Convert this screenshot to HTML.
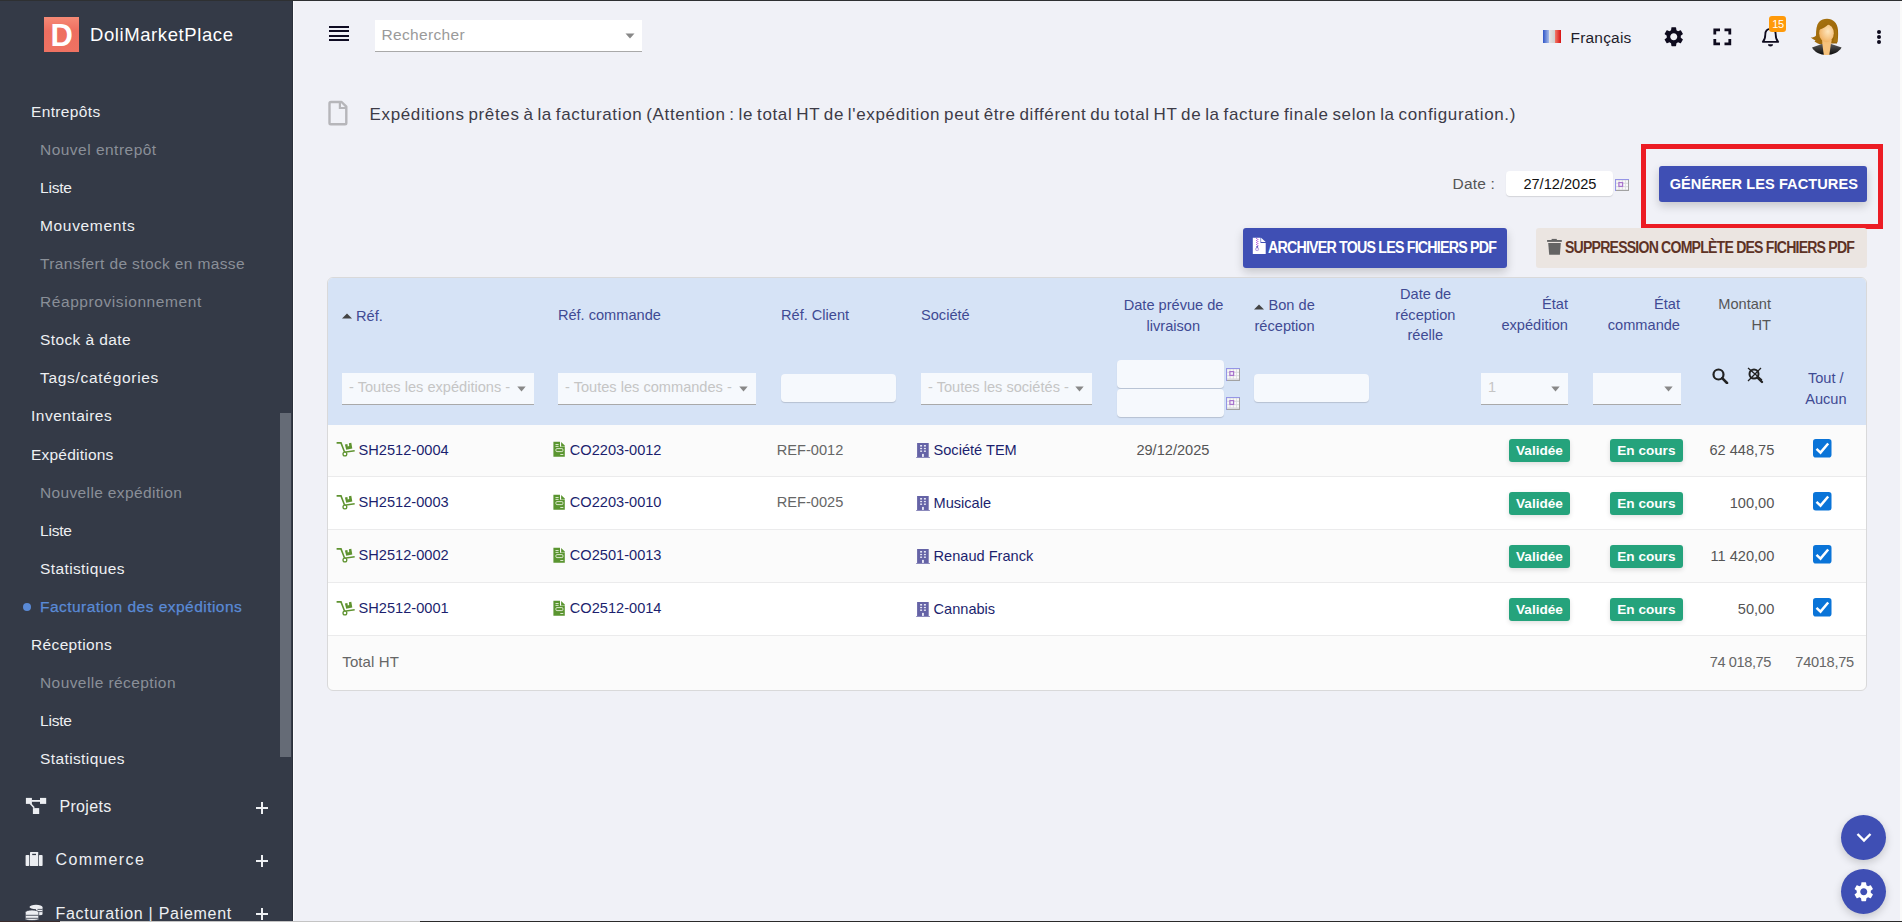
<!DOCTYPE html>
<html><head><meta charset="utf-8">
<style>
*{box-sizing:border-box;margin:0;padding:0}
html,body{width:1902px;height:922px;overflow:hidden;background:#f0f1f7;font-family:"Liberation Sans",sans-serif}
.a{position:absolute;white-space:nowrap}
svg.a{display:block}
</style></head><body>
<div class="a" style="left:0px;top:0px;width:292px;height:922px;background:#343a47"></div>
<div class="a" style="left:292px;top:0px;width:1px;height:922px;background:#2b303b"></div>
<div class="a" style="left:293px;top:0px;width:1px;height:922px;background:#fbfbfd"></div>
<div class="a" style="left:280px;top:413px;width:11px;height:344px;background:#656b76"></div>
<div class="a" style="left:44px;top:17px;width:35px;height:35px;background:linear-gradient(#f58a76,#ee6e60 40%,#ef7262)"></div>
<div class="a " style="top:19.56px;font-size:31px;line-height:31px;color:#fff;font-weight:bold;left:50.5px;">D</div>
<div class="a " style="top:26.34px;font-size:18.5px;line-height:18.5px;color:#fff;letter-spacing:0.59px;left:90px;">DoliMarketPlace</div>
<div class="a " style="top:103.68px;font-size:15.5px;line-height:15.5px;color:#eef0f3;letter-spacing:0.36px;left:31px;">Entrepôts</div>
<div class="a " style="top:141.78px;font-size:15.5px;line-height:15.5px;color:#8a8f98;letter-spacing:0.48px;left:40px;">Nouvel entrepôt</div>
<div class="a " style="top:179.88px;font-size:15.5px;line-height:15.5px;color:#eef0f3;letter-spacing:-0.2px;left:40px;">Liste</div>
<div class="a " style="top:217.98px;font-size:15.5px;line-height:15.5px;color:#eef0f3;letter-spacing:0.67px;left:40px;">Mouvements</div>
<div class="a " style="top:256.08px;font-size:15.5px;line-height:15.5px;color:#8a8f98;letter-spacing:0.37px;left:40px;">Transfert de stock en masse</div>
<div class="a " style="top:294.18px;font-size:15.5px;line-height:15.5px;color:#8a8f98;letter-spacing:0.58px;left:40px;">Réapprovisionnement</div>
<div class="a " style="top:332.28px;font-size:15.5px;line-height:15.5px;color:#eef0f3;letter-spacing:0.4px;left:40px;">Stock à date</div>
<div class="a " style="top:370.38px;font-size:15.5px;line-height:15.5px;color:#eef0f3;letter-spacing:0.7px;left:40px;">Tags/catégories</div>
<div class="a " style="top:408.48px;font-size:15.5px;line-height:15.5px;color:#eef0f3;letter-spacing:0.49px;left:31px;">Inventaires</div>
<div class="a " style="top:446.58px;font-size:15.5px;line-height:15.5px;color:#eef0f3;letter-spacing:0.22px;left:31px;">Expéditions</div>
<div class="a " style="top:484.68px;font-size:15.5px;line-height:15.5px;color:#8a8f98;letter-spacing:0.36px;left:40px;">Nouvelle expédition</div>
<div class="a " style="top:522.78px;font-size:15.5px;line-height:15.5px;color:#eef0f3;letter-spacing:-0.2px;left:40px;">Liste</div>
<div class="a " style="top:560.88px;font-size:15.5px;line-height:15.5px;color:#eef0f3;letter-spacing:0.39px;left:40px;">Statistiques</div>
<div class="a " style="top:598.98px;font-size:15.5px;line-height:15.5px;color:#5a8ad6;letter-spacing:0.47px;left:40px;-webkit-text-stroke:0.25px #5a8ad6;">Facturation des expéditions</div>
<div class="a " style="top:637.08px;font-size:15.5px;line-height:15.5px;color:#eef0f3;letter-spacing:0.36px;left:31px;">Réceptions</div>
<div class="a " style="top:675.18px;font-size:15.5px;line-height:15.5px;color:#8a8f98;letter-spacing:0.42px;left:40px;">Nouvelle réception</div>
<div class="a " style="top:713.28px;font-size:15.5px;line-height:15.5px;color:#eef0f3;letter-spacing:-0.2px;left:40px;">Liste</div>
<div class="a " style="top:751.38px;font-size:15.5px;line-height:15.5px;color:#eef0f3;letter-spacing:0.39px;left:40px;">Statistiques</div>
<div class="a" style="left:23px;top:603px;width:8px;height:8px;background:#5a8ad6;border-radius:50%"></div>
<div class="a " style="top:799.26px;font-size:16px;line-height:16px;color:#eef0f3;letter-spacing:0.36px;left:59.4px;">Projets</div>
<div class="a " style="top:851.96px;font-size:16px;line-height:16px;color:#eef0f3;letter-spacing:1.45px;left:55.5px;">Commerce</div>
<div class="a " style="top:905.86px;font-size:16px;line-height:16px;color:#eef0f3;letter-spacing:0.72px;left:55.5px;">Facturation | Paiement</div>
<div class="a" style="left:256px;top:806.5px;width:12px;height:2.0px;background:#eef0f3"></div>
<div class="a" style="left:261px;top:801.5px;width:2px;height:12.0px;background:#eef0f3"></div>
<div class="a" style="left:256px;top:859.8px;width:12px;height:2.0px;background:#eef0f3"></div>
<div class="a" style="left:261px;top:854.8px;width:2px;height:12.0px;background:#eef0f3"></div>
<div class="a" style="left:256px;top:913px;width:12px;height:2px;background:#eef0f3"></div>
<div class="a" style="left:261px;top:908px;width:2px;height:12px;background:#eef0f3"></div>
<svg class="a" style="left:25px;top:797px" width="23" height="18" viewBox="0 0 23 18"><g fill="#eceef2"><rect x="0.9" y="0.9" width="6" height="6"/><rect x="15" y="0.9" width="6.2" height="6"/><rect x="7.9" y="11.1" width="6.3" height="5.9"/><rect x="6.5" y="3" width="8.8" height="1.8"/></g><path d="M5.3 6.5L9.2 10.8" stroke="#eceef2" stroke-width="1.6"/></svg>
<svg class="a" style="left:22px;top:846px" width="26" height="24" viewBox="0 0 26 24"><g fill="#eceef2"><rect x="3.6" y="8.9" width="3.7" height="11.1" rx="0.8"/><rect x="8" y="6" width="8.2" height="14" rx="0.6"/><rect x="16.9" y="8.9" width="3.7" height="11.1" rx="0.8"/></g><rect x="10.2" y="7.8" width="3.8" height="1.3" fill="#343a47"/></svg>
<svg class="a" style="left:22px;top:900px" width="26" height="22" viewBox="0 0 26 22"><g fill="#eceef2"><rect x="14" y="7" width="6.5" height="7.2"/><ellipse cx="17.3" cy="14.2" rx="3.2" ry="1"/><ellipse cx="14" cy="7" rx="6.5" ry="2.2"/></g><path d="M15.5 9.4H20.5M15.5 11.6H20.5" stroke="#343a47" stroke-width="0.8"/><g fill="#eceef2" stroke="#343a47" stroke-width="0.7"><path d="M3.3 12.2A6.7 2.2 0 0 1 16.7 12.2V19.2A6.7 1.3 0 0 1 3.3 19.2Z"/></g><path d="M3.6 15.3H16.4M3.6 18.3H16.4" stroke="#343a47" stroke-width="0.8"/></svg>
<div class="a" style="left:329px;top:26px;width:20px;height:2px;background:#0e0b22"></div>
<div class="a" style="left:329px;top:30px;width:20px;height:2px;background:#0e0b22"></div>
<div class="a" style="left:329px;top:35px;width:20px;height:2px;background:#0e0b22"></div>
<div class="a" style="left:329px;top:39px;width:20px;height:2px;background:#0e0b22"></div>
<div class="a" style="left:375px;top:20px;width:267px;height:32px;background:#fff;border-bottom:1px solid #a9a9a9"></div>
<div class="a " style="top:27.08px;font-size:15.5px;line-height:15.5px;color:#9a9a9a;letter-spacing:0.33px;left:381.5px;">Rechercher</div>
<svg class="a" style="left:625px;top:33px" width="10" height="6" viewBox="0 0 10 6"><path d="M0.5 0.5 L9.5 0.5 L5 5.5Z" fill="#888"/></svg>
<div class="a" style="left:1543px;top:30px;width:6px;height:13px;background:linear-gradient(90deg,#2f55c8,#a9bde9);"></div>
<div class="a" style="left:1549px;top:30px;width:6px;height:13px;background:linear-gradient(90deg,#e6e6e6,#cfcfcf);"></div>
<div class="a" style="left:1555px;top:30px;width:6px;height:13px;background:linear-gradient(90deg,#f07a6a,#d81010);"></div>
<div class="a " style="top:29.98px;font-size:15.5px;line-height:15.5px;color:#1f1d2b;letter-spacing:0.2px;left:1570.5px;">Français</div>
<svg class="a" style="left:1662px;top:25px" width="23.5" height="23.5" viewBox="0 0 24 24"><path fill="#0e0b1e" d="M19.14 12.94c.04-.3.06-.61.06-.94 0-.32-.02-.64-.07-.94l2.03-1.58a.49.49 0 0 0 .12-.61l-1.92-3.32a.488.488 0 0 0-.59-.22l-2.39.96c-.5-.38-1.03-.7-1.62-.94l-.36-2.54a.484.484 0 0 0-.48-.41h-3.84c-.24 0-.43.17-.47.41l-.36 2.54c-.59.24-1.13.57-1.62.94l-2.39-.96c-.22-.08-.47 0-.59.22L2.74 8.87c-.12.21-.08.47.12.61l2.03 1.58c-.05.3-.09.63-.09.94s.02.64.07.94l-2.03 1.58a.49.49 0 0 0-.12.61l1.92 3.32c.12.22.37.29.59.22l2.39-.96c.5.38 1.03.7 1.62.94l.36 2.54c.05.24.24.41.48.41h3.84c.24 0 .44-.17.47-.41l.36-2.54c.59-.24 1.13-.56 1.62-.94l2.39.96c.22.08.47 0 .59-.22l1.92-3.32c.12-.22.07-.47-.12-.61l-2.01-1.58zM12 15.6c-1.98 0-3.6-1.62-3.6-3.6s1.62-3.6 3.6-3.6 3.6 1.62 3.6 3.6-1.62 3.6-3.6 3.6z"/></svg>
<svg class="a" style="left:1713px;top:28px" width="19" height="18" viewBox="0 0 19 18"><path d="M1.8 6.5V1.8H7 M11.5 1.8H16.8V6.5 M16.8 11V15.8H11.5 M7 15.8H1.8V11" fill="none" stroke="#0e0b1e" stroke-width="2.8"/></svg>
<svg class="a" style="left:1755px;top:10px" width="40" height="40" viewBox="0 0 40 40"><path d="M7.8 31.8 C9.6 30 10.3 28 10.3 24.5 C10.3 20.5 12.3 18.8 15.5 18.8 C18.7 18.8 20.7 20.5 20.7 24.5 C20.7 28 21.4 30 23.2 31.8 Z" fill="none" stroke="#0e0b1e" stroke-width="1.8" stroke-linejoin="round"/><path d="M13 34.2 H18 C18 35.8 16.9 36.4 15.5 36.4 C14.1 36.4 13 35.8 13 34.2Z" fill="#0e0b1e"/></svg>
<div class="a" style="left:1769px;top:16px;width:17px;height:16px;background:#ff9a0a;border-radius:3px"></div>
<div class="a " style="top:19.29px;font-size:11px;line-height:11px;color:#fff;letter-spacing:-0.4px;left:1772.2px;">15</div>
<svg class="a" style="left:1810px;top:18px" width="34" height="38" viewBox="0 0 34 38"><defs><radialGradient id="fg" cx="0.6" cy="0.4" r="0.65"><stop offset="0" stop-color="#fee6bd"/><stop offset="1" stop-color="#f0b060"/></radialGradient><linearGradient id="sg" x1="0" y1="0" x2="0" y2="1"><stop offset="0" stop-color="#5a5a5a"/><stop offset="1" stop-color="#0a0a0a"/></linearGradient><linearGradient id="hg" x1="0" y1="0" x2="1" y2="1"><stop offset="0" stop-color="#a87410"/><stop offset="1" stop-color="#9a6408"/></linearGradient></defs>
<path d="M17 0.8 C23 0.8 27.5 5 28 12 C28.3 18 28 22 27 25.5 L20 25.5 L12 26.5 C9 26.5 6.5 25 4.5 23.5 L5.5 22.5 C3.5 21.5 2 20.5 0.7 19.5 C3 19.5 5 19 6 17.5 C6 12 6.5 7 9 4 C11 2 14 0.8 17 0.8 Z" fill="url(#hg)"/>
<path d="M12.1 22 L21.75 22 L19.1 37 L13.4 37 Z" fill="#f3c07a"/>
<ellipse cx="16.5" cy="15.2" rx="7.3" ry="9" fill="url(#fg)"/>
<path d="M7.5 13 L9.2 11.8 C13 10.5 16 8.5 18.5 6.2 L15 3 L8 6 Z" fill="url(#hg)"/>
<path d="M24.5 10 C25 15 24.5 20 23 24 L27.5 24 L27 12Z" fill="#a87410"/>
<path d="M2 29.4 L11.9 26 L21.2 26 L31.6 29.4 C29 34 23 36.9 16.5 36.9 C10 36.9 4.5 34 2 29.4 Z" fill="url(#sg)"/>
<path d="M12.3 25.5 L21 25.5 L19.3 37 L13.8 37 Z" fill="#f6c27c"/></svg>
<div class="a" style="left:1876.5px;top:30px;width:4.0px;height:4px;background:#0e0b1e;border-radius:50%"></div>
<div class="a" style="left:1876.5px;top:35px;width:4.0px;height:4px;background:#0e0b1e;border-radius:50%"></div>
<div class="a" style="left:1876.5px;top:40px;width:4.0px;height:4px;background:#0e0b1e;border-radius:50%"></div>
<svg class="a" style="left:322px;top:96px" width="32" height="34" viewBox="0 0 32 34"><path d="M7.5 7.5 Q7.5 6 9 6 H19.6 L24.3 10.7 V27 Q24.3 28.3 23 28.3 H8.8 Q7.5 28.3 7.5 27 Z" fill="none" stroke="#b6b6ba" stroke-width="2.4" stroke-linejoin="round"/><path d="M17.9 6.5 V12 H23.8" fill="none" stroke="#b6b6ba" stroke-width="2.2"/></svg>
<div class="a " style="top:105.61px;font-size:17px;line-height:17px;color:#3d3b47;letter-spacing:0.65px;left:369.5px;word-spacing:-1.5px;">Expéditions prêtes à la facturation (Attention : le total HT de l&#39;expédition peut être différent du total HT de la facture finale selon la configuration.)</div>
<div class="a " style="top:176.48px;font-size:15.5px;line-height:15.5px;color:#555;letter-spacing:0.2px;left:1452.5px;">Date :</div>
<div class="a" style="left:1506px;top:171px;width:107px;height:25px;background:#fff;border-radius:4px;box-shadow:0 1px 1px rgba(0,0,0,0.12)"></div>
<div class="a " style="top:176.74px;font-size:14.6px;line-height:14.6px;color:#111;left:1523.4px;">27/12/2025</div>
<svg class="a" style="left:1615px;top:179px" width="14" height="12" viewBox="0 0 14 12"><rect x="0" y="0" width="14" height="12" fill="#dcdce0"/><rect x="1.3" y="1.5" width="2.2" height="2.2" fill="#fafafa"/><rect x="1.3" y="4.9" width="2.2" height="2.2" fill="#fafafa"/><rect x="1.3" y="8.2" width="2.2" height="2.2" fill="#fafafa"/><rect x="4.6" y="1.5" width="2.2" height="2.2" fill="#fafafa"/><rect x="4.6" y="4.9" width="2.2" height="2.2" fill="#fafafa"/><rect x="4.6" y="8.2" width="2.2" height="2.2" fill="#fafafa"/><rect x="7.9" y="1.5" width="2.2" height="2.2" fill="#fafafa"/><rect x="7.9" y="4.9" width="2.2" height="2.2" fill="#fafafa"/><rect x="7.9" y="8.2" width="2.2" height="2.2" fill="#fafafa"/><rect x="10.9" y="1.5" width="2.2" height="2.2" fill="#fafafa"/><rect x="10.9" y="4.9" width="2.2" height="2.2" fill="#fafafa"/><rect x="10.9" y="8.2" width="2.2" height="2.2" fill="#fafafa"/><rect x="0" y="0" width="14" height="1" fill="#9595e6"/><rect x="0" y="0" width="1" height="12" fill="#9595e6"/><rect x="13" y="1" width="1" height="11" fill="#a2a2a2"/><rect x="1" y="11" width="13" height="1" fill="#a2a2a2"/><rect x="3.9" y="3.6" width="3.7" height="3.8" fill="#f4eefa" stroke="#a874cc" stroke-width="1.2"/></svg>
<div class="a" style="left:1641px;top:144px;width:242px;height:85px;border:5px solid #ec1c24;box-sizing:border-box"></div>
<div class="a" style="left:1659px;top:166px;width:208px;height:36px;background:#3f4fb4;border-radius:3px;box-shadow:0 4px 10px rgba(0,0,0,0.18)"></div>
<div class="a " style="top:176.74px;font-size:14.6px;line-height:14.6px;color:#fff;font-weight:bold;letter-spacing:0.05px;left:1669.7px;">GÉNÉRER LES FACTURES</div>
<div class="a" style="left:1243px;top:228px;width:264px;height:40px;background:#3f4fb4;border-radius:3px;box-shadow:0 4px 10px rgba(0,0,0,0.18)"></div>
<svg class="a" style="left:1248px;top:234px" width="24" height="24" viewBox="0 0 24 24"><path d="M4.8 3.8H12.5V9H17.7V20H4.8Z" fill="#fff"/><path d="M13.1 3.8L17.7 8.1H13.1Z" fill="#fff"/><g fill="#b556d6"><rect x="8.1" y="4" width="1.1" height="1"/><rect x="9.3" y="5" width="1.1" height="1"/><rect x="8.1" y="6" width="1.1" height="1"/><rect x="9.3" y="7" width="1.1" height="1"/><rect x="8.1" y="8" width="1.1" height="1"/><rect x="9.3" y="9" width="1.1" height="1"/><rect x="8.1" y="10" width="1.1" height="1"/><rect x="9.3" y="11" width="1.1" height="1"/></g><rect x="8.3" y="12.2" width="1.8" height="1.6" fill="#3a3ab0"/><ellipse cx="9.1" cy="15.2" rx="1.6" ry="1.5" fill="#eef" stroke="#a070d0" stroke-width="0.6"/></svg>
<div class="a " style="top:240.06px;font-size:16px;line-height:16px;color:#fff;font-weight:bold;letter-spacing:-0.9px;left:1268px;transform:scaleX(0.89);transform-origin:0 0;">ARCHIVER TOUS LES FICHIERS PDF</div>
<div class="a" style="left:1536px;top:228px;width:331px;height:40px;background:#ebe5e1;border-radius:3px"></div>
<svg class="a" style="left:1542px;top:234px" width="24" height="24" viewBox="0 0 24 24"><g fill="#646464"><rect x="9.6" y="4.9" width="5.2" height="1.4"/><rect x="5.1" y="6" width="14.7" height="1.9"/><path d="M6.2 8.9H18.8L17.9 20.8H7.2Z"/></g></svg>
<div class="a " style="top:240.16px;font-size:16px;line-height:16px;color:#5e3326;font-weight:bold;letter-spacing:-0.9px;left:1564.5px;transform:scaleX(0.88);transform-origin:0 0;">SUPPRESSION COMPLÈTE DES FICHIERS PDF</div>
<div class="a" style="left:327px;top:277px;width:1540px;height:414px;border:1px solid #d9d9da;border-radius:6px;background:#fbfbfb;box-sizing:border-box;overflow:hidden"></div>
<div class="a" style="left:328px;top:278px;width:1538px;height:147px;background:#d6e3f6;border-radius:5px 5px 0 0"></div>
<div class="a" style="left:328px;top:425px;width:1538px;height:52px;background:#fbfbfb"></div>
<div class="a" style="left:328px;top:476px;width:1538px;height:1px;background:#ebebec"></div>
<div class="a" style="left:328px;top:477px;width:1538px;height:53px;background:#ffffff"></div>
<div class="a" style="left:328px;top:529px;width:1538px;height:1px;background:#ebebec"></div>
<div class="a" style="left:328px;top:530px;width:1538px;height:53px;background:#fbfbfb"></div>
<div class="a" style="left:328px;top:582px;width:1538px;height:1px;background:#ebebec"></div>
<div class="a" style="left:328px;top:583px;width:1538px;height:53px;background:#ffffff"></div>
<div class="a" style="left:328px;top:635px;width:1538px;height:1px;background:#ebebec"></div>
<svg class="a" style="left:342px;top:313px" width="10" height="6" viewBox="0 0 10 6"><path d="M0 5.5L5 0.5L10 5.5Z" fill="#444"/></svg>
<div class="a " style="top:308.64px;font-size:14.6px;line-height:14.6px;color:#3f4a93;left:356px;">Réf.</div>
<div class="a " style="top:308.44px;font-size:14.6px;line-height:14.6px;color:#3f4a93;left:557.9px;">Réf. commande</div>
<div class="a " style="top:308.44px;font-size:14.6px;line-height:14.6px;color:#3f4a93;left:781px;">Réf. Client</div>
<div class="a " style="top:308.44px;font-size:14.6px;line-height:14.6px;color:#3f4a93;left:921px;">Société</div>
<div class="a " style="top:297.84px;font-size:14.6px;line-height:14.6px;color:#3f4a93;left:873.5999999999999px;width:600px;text-align:center;">Date prévue de</div>
<div class="a " style="top:318.64px;font-size:14.6px;line-height:14.6px;color:#3f4a93;left:873.3px;width:600px;text-align:center;">livraison</div>
<svg class="a" style="left:1254px;top:304px" width="10" height="6" viewBox="0 0 10 6"><path d="M0 5.5L5 0.5L10 5.5Z" fill="#444"/></svg>
<div class="a " style="top:297.84px;font-size:14.6px;line-height:14.6px;color:#3f4a93;left:1268.5px;">Bon de</div>
<div class="a " style="top:318.64px;font-size:14.6px;line-height:14.6px;color:#3f4a93;left:1254.5px;">réception</div>
<div class="a " style="top:287.44px;font-size:14.6px;line-height:14.6px;color:#3f4a93;left:1125.6px;width:600px;text-align:center;">Date de</div>
<div class="a " style="top:308.44px;font-size:14.6px;line-height:14.6px;color:#3f4a93;left:1125.4px;width:600px;text-align:center;">réception</div>
<div class="a " style="top:328.34px;font-size:14.6px;line-height:14.6px;color:#3f4a93;left:1125.3px;width:600px;text-align:center;">réelle</div>
<div class="a " style="top:297.44px;font-size:14.6px;line-height:14.6px;color:#3f4a93;right:334px;">État</div>
<div class="a " style="top:318.24px;font-size:14.6px;line-height:14.6px;color:#3f4a93;right:334px;">expédition</div>
<div class="a " style="top:297.44px;font-size:14.6px;line-height:14.6px;color:#3f4a93;right:222px;">État</div>
<div class="a " style="top:318.24px;font-size:14.6px;line-height:14.6px;color:#3f4a93;right:222px;">commande</div>
<div class="a " style="top:297.44px;font-size:14.6px;line-height:14.6px;color:#555;right:131px;">Montant</div>
<div class="a " style="top:318.24px;font-size:14.6px;line-height:14.6px;color:#555;right:131px;">HT</div>
<div class="a " style="top:371.24px;font-size:14.6px;line-height:14.6px;color:#3f4a93;left:1525.8px;width:600px;text-align:center;">Tout /</div>
<div class="a " style="top:391.64px;font-size:14.6px;line-height:14.6px;color:#3f4a93;left:1525.9px;width:600px;text-align:center;">Aucun</div>
<div class="a" style="left:342px;top:373px;width:192px;height:32px;background:#f6f9fd;border-bottom:1px solid #a9a9a9"></div>
<div class="a " style="top:380.24px;font-size:14.6px;line-height:14.6px;color:#c5c5c5;left:349px;">- Toutes les expéditions -</div>
<svg class="a" style="left:517px;top:386px" width="9" height="6" viewBox="0 0 9 6"><path d="M0.3 0.5L8.7 0.5L4.5 5.5Z" fill="#888"/></svg>
<div class="a" style="left:558px;top:373px;width:198px;height:32px;background:#f6f9fd;border-bottom:1px solid #a9a9a9"></div>
<div class="a " style="top:380.24px;font-size:14.6px;line-height:14.6px;color:#c5c5c5;left:565px;">- Toutes les commandes -</div>
<svg class="a" style="left:739px;top:386px" width="9" height="6" viewBox="0 0 9 6"><path d="M0.3 0.5L8.7 0.5L4.5 5.5Z" fill="#888"/></svg>
<div class="a" style="left:781px;top:374px;width:115px;height:28px;background:#f6f9fd;border-radius:4px;box-shadow:0 1px 1px rgba(0,0,0,0.15)"></div>
<div class="a" style="left:921px;top:373px;width:171px;height:32px;background:#f6f9fd;border-bottom:1px solid #a9a9a9"></div>
<div class="a " style="top:380.24px;font-size:14.6px;line-height:14.6px;color:#c5c5c5;left:928px;">- Toutes les sociétés -</div>
<svg class="a" style="left:1075px;top:386px" width="9" height="6" viewBox="0 0 9 6"><path d="M0.3 0.5L8.7 0.5L4.5 5.5Z" fill="#888"/></svg>
<div class="a" style="left:1117px;top:360px;width:107px;height:28px;background:#f6f9fd;border-radius:4px;box-shadow:0 1px 1px rgba(0,0,0,0.15)"></div>
<div class="a" style="left:1117px;top:389px;width:107px;height:28px;background:#f6f9fd;border-radius:4px;box-shadow:0 1px 1px rgba(0,0,0,0.15)"></div>
<svg class="a" style="left:1226px;top:368px" width="14" height="13" viewBox="0 0 14 13"><rect x="0" y="0" width="14" height="13" fill="#dcdce0"/><rect x="1.3" y="1.5" width="2.2" height="2.2" fill="#fafafa"/><rect x="1.3" y="4.9" width="2.2" height="2.2" fill="#fafafa"/><rect x="1.3" y="8.2" width="2.2" height="2.2" fill="#fafafa"/><rect x="4.6" y="1.5" width="2.2" height="2.2" fill="#fafafa"/><rect x="4.6" y="4.9" width="2.2" height="2.2" fill="#fafafa"/><rect x="4.6" y="8.2" width="2.2" height="2.2" fill="#fafafa"/><rect x="7.9" y="1.5" width="2.2" height="2.2" fill="#fafafa"/><rect x="7.9" y="4.9" width="2.2" height="2.2" fill="#fafafa"/><rect x="7.9" y="8.2" width="2.2" height="2.2" fill="#fafafa"/><rect x="10.9" y="1.5" width="2.2" height="2.2" fill="#fafafa"/><rect x="10.9" y="4.9" width="2.2" height="2.2" fill="#fafafa"/><rect x="10.9" y="8.2" width="2.2" height="2.2" fill="#fafafa"/><rect x="0" y="0" width="14" height="1" fill="#9595e6"/><rect x="0" y="0" width="1" height="13" fill="#9595e6"/><rect x="13" y="1" width="1" height="12" fill="#a2a2a2"/><rect x="1" y="12" width="13" height="1" fill="#a2a2a2"/><rect x="3.9" y="3.6" width="3.7" height="3.8" fill="#f4eefa" stroke="#a874cc" stroke-width="1.2"/></svg>
<svg class="a" style="left:1226px;top:397px" width="14" height="13" viewBox="0 0 14 13"><rect x="0" y="0" width="14" height="13" fill="#dcdce0"/><rect x="1.3" y="1.5" width="2.2" height="2.2" fill="#fafafa"/><rect x="1.3" y="4.9" width="2.2" height="2.2" fill="#fafafa"/><rect x="1.3" y="8.2" width="2.2" height="2.2" fill="#fafafa"/><rect x="4.6" y="1.5" width="2.2" height="2.2" fill="#fafafa"/><rect x="4.6" y="4.9" width="2.2" height="2.2" fill="#fafafa"/><rect x="4.6" y="8.2" width="2.2" height="2.2" fill="#fafafa"/><rect x="7.9" y="1.5" width="2.2" height="2.2" fill="#fafafa"/><rect x="7.9" y="4.9" width="2.2" height="2.2" fill="#fafafa"/><rect x="7.9" y="8.2" width="2.2" height="2.2" fill="#fafafa"/><rect x="10.9" y="1.5" width="2.2" height="2.2" fill="#fafafa"/><rect x="10.9" y="4.9" width="2.2" height="2.2" fill="#fafafa"/><rect x="10.9" y="8.2" width="2.2" height="2.2" fill="#fafafa"/><rect x="0" y="0" width="14" height="1" fill="#9595e6"/><rect x="0" y="0" width="1" height="13" fill="#9595e6"/><rect x="13" y="1" width="1" height="12" fill="#a2a2a2"/><rect x="1" y="12" width="13" height="1" fill="#a2a2a2"/><rect x="3.9" y="3.6" width="3.7" height="3.8" fill="#f4eefa" stroke="#a874cc" stroke-width="1.2"/></svg>
<div class="a" style="left:1254px;top:374px;width:115px;height:28px;background:#f6f9fd;border-radius:4px;box-shadow:0 1px 1px rgba(0,0,0,0.15)"></div>
<div class="a" style="left:1481px;top:373px;width:87px;height:32px;background:#f6f9fd;border-bottom:1px solid #a9a9a9"></div>
<div class="a " style="top:380.24px;font-size:14.6px;line-height:14.6px;color:#c5c5c5;left:1488px;">1</div>
<svg class="a" style="left:1551px;top:386px" width="9" height="6" viewBox="0 0 9 6"><path d="M0.3 0.5L8.7 0.5L4.5 5.5Z" fill="#888"/></svg>
<div class="a" style="left:1593px;top:373px;width:88px;height:32px;background:#f6f9fd;border-bottom:1px solid #a9a9a9"></div>
<svg class="a" style="left:1664px;top:386px" width="9" height="6" viewBox="0 0 9 6"><path d="M0.3 0.5L8.7 0.5L4.5 5.5Z" fill="#888"/></svg>
<svg class="a" style="left:1712px;top:368px" width="17" height="16" viewBox="0 0 17 16"><circle cx="6.5" cy="6.5" r="5" fill="none" stroke="#222" stroke-width="2.2"/><path d="M10.2 10.2L15 15" stroke="#222" stroke-width="2.6" stroke-linecap="round"/></svg>
<svg class="a" style="left:1746px;top:366px" width="19" height="18" viewBox="0 0 19 18"><circle cx="8" cy="8" r="4.5" fill="none" stroke="#222" stroke-width="2"/><path d="M11.3 11.3L16 16" stroke="#222" stroke-width="2.4" stroke-linecap="round"/><path d="M2 2L16 14M15 2L2 15" stroke="#222" stroke-width="1.3"/></svg>
<svg class="a" style="left:334px;top:438px" width="22" height="20" viewBox="0 0 22 20"><path d="M3.4 4.9H7L10.6 14.2L19.9 12.9" fill="none" stroke="#5f9330" stroke-width="1.6" stroke-linecap="square" stroke-linejoin="miter"/><circle cx="10.9" cy="16" r="1.9" fill="#fff" stroke="#5f9330" stroke-width="1.3"/><path d="M10.9 6.6L13.4 6.1L13.8 8.4L15.2 8.1L14.9 5.3L17.3 4.8L18.3 10.4L12.2 11.7Z" fill="#5f9330"/></svg>
<div class="a " style="top:442.54px;font-size:14.6px;line-height:14.6px;color:#1c1f6e;left:358.6px;">SH2512-0004</div>
<svg class="a" style="left:550px;top:439px" width="18" height="20" viewBox="0 0 18 20"><path d="M3.4 2.7H10V7.7H14.8V17.8H3.4Z" fill="#5a9530"/><path d="M11.1 2.9L14.8 6.6V7.4H11.1Z" fill="#5a9530"/><path d="M5.5 5.5H8.6M5.5 7.4H8.6M10.3 15.5H13.3" stroke="#e8f0dc" stroke-width="0.9"/><rect x="5.9" y="9.6" width="7" height="3" rx="1" fill="none" stroke="#e8f0dc" stroke-width="0.9"/></svg>
<div class="a " style="top:442.54px;font-size:14.6px;line-height:14.6px;color:#1c1f6e;left:569.8px;">CO2203-0012</div>
<div class="a " style="top:442.54px;font-size:14.6px;line-height:14.6px;color:#666;left:776.8px;">REF-0012</div>
<svg class="a" style="left:913px;top:440px" width="20" height="20" viewBox="0 0 20 20"><path d="M4.1 3H15.7V16.9H16.9V17.7H3.2V16.9H4.1Z" fill="#6563a6"/><g fill="#e6e6f4"><rect x="7.1" y="5" width="2" height="1.6"/><rect x="10.9" y="5" width="2" height="1.6"/><rect x="7.1" y="7.9" width="2" height="1.3"/><rect x="10.9" y="7.9" width="2" height="1.3"/><rect x="7.1" y="10.5" width="2" height="1.4"/><rect x="10.9" y="10.5" width="2" height="1.4"/><rect x="9" y="13.9" width="1.9" height="3"/></g></svg>
<div class="a " style="top:443.24px;font-size:14.6px;line-height:14.6px;color:#1c1f6e;left:933.5px;">Société TEM</div>
<div class="a " style="top:442.54px;font-size:14.6px;line-height:14.6px;color:#555;left:1136.4px;">29/12/2025</div>
<div class="a" style="left:1509px;top:439px;width:61px;height:23px;background:#25a37c;border-radius:3px;box-shadow:0 2px 5px rgba(0,0,0,0.12)"></div>
<div class="a " style="top:443.89px;font-size:13.6px;line-height:13.6px;color:#fff;font-weight:bold;left:1516px;">Validée</div>
<div class="a" style="left:1610px;top:439px;width:73px;height:23px;background:#25a37c;border-radius:3px;box-shadow:0 2px 5px rgba(0,0,0,0.12)"></div>
<div class="a " style="top:443.89px;font-size:13.6px;line-height:13.6px;color:#fff;font-weight:bold;left:1617.3px;">En cours</div>
<div class="a " style="top:442.84px;font-size:14.6px;line-height:14.6px;color:#555;right:127.70000000000005px;">62 448,75</div>
<svg class="a" style="left:1813px;top:439px" width="19" height="19" viewBox="0 0 19 19"><rect x="0" y="0" width="18.5" height="18.5" rx="2.8" fill="#0a74d8"/><path d="M3.5 9.9L7.5 13.6L15.2 4.5" fill="none" stroke="#fff" stroke-width="2.5"/></svg>
<svg class="a" style="left:334px;top:491px" width="22" height="20" viewBox="0 0 22 20"><path d="M3.4 4.9H7L10.6 14.2L19.9 12.9" fill="none" stroke="#5f9330" stroke-width="1.6" stroke-linecap="square" stroke-linejoin="miter"/><circle cx="10.9" cy="16" r="1.9" fill="#fff" stroke="#5f9330" stroke-width="1.3"/><path d="M10.9 6.6L13.4 6.1L13.8 8.4L15.2 8.1L14.9 5.3L17.3 4.8L18.3 10.4L12.2 11.7Z" fill="#5f9330"/></svg>
<div class="a " style="top:495.49px;font-size:14.6px;line-height:14.6px;color:#1c1f6e;left:358.6px;">SH2512-0003</div>
<svg class="a" style="left:550px;top:492px" width="18" height="20" viewBox="0 0 18 20"><path d="M3.4 2.7H10V7.7H14.8V17.8H3.4Z" fill="#5a9530"/><path d="M11.1 2.9L14.8 6.6V7.4H11.1Z" fill="#5a9530"/><path d="M5.5 5.5H8.6M5.5 7.4H8.6M10.3 15.5H13.3" stroke="#e8f0dc" stroke-width="0.9"/><rect x="5.9" y="9.6" width="7" height="3" rx="1" fill="none" stroke="#e8f0dc" stroke-width="0.9"/></svg>
<div class="a " style="top:495.49px;font-size:14.6px;line-height:14.6px;color:#1c1f6e;left:569.8px;">CO2203-0010</div>
<div class="a " style="top:495.49px;font-size:14.6px;line-height:14.6px;color:#666;left:776.8px;">REF-0025</div>
<svg class="a" style="left:913px;top:493px" width="20" height="20" viewBox="0 0 20 20"><path d="M4.1 3H15.7V16.9H16.9V17.7H3.2V16.9H4.1Z" fill="#6563a6"/><g fill="#e6e6f4"><rect x="7.1" y="5" width="2" height="1.6"/><rect x="10.9" y="5" width="2" height="1.6"/><rect x="7.1" y="7.9" width="2" height="1.3"/><rect x="10.9" y="7.9" width="2" height="1.3"/><rect x="7.1" y="10.5" width="2" height="1.4"/><rect x="10.9" y="10.5" width="2" height="1.4"/><rect x="9" y="13.9" width="1.9" height="3"/></g></svg>
<div class="a " style="top:496.19px;font-size:14.6px;line-height:14.6px;color:#1c1f6e;left:933.5px;">Musicale</div>
<div class="a" style="left:1509px;top:492px;width:61px;height:23px;background:#25a37c;border-radius:3px;box-shadow:0 2px 5px rgba(0,0,0,0.12)"></div>
<div class="a " style="top:496.84px;font-size:13.6px;line-height:13.6px;color:#fff;font-weight:bold;left:1516px;">Validée</div>
<div class="a" style="left:1610px;top:492px;width:73px;height:23px;background:#25a37c;border-radius:3px;box-shadow:0 2px 5px rgba(0,0,0,0.12)"></div>
<div class="a " style="top:496.84px;font-size:13.6px;line-height:13.6px;color:#fff;font-weight:bold;left:1617.3px;">En cours</div>
<div class="a " style="top:495.79px;font-size:14.6px;line-height:14.6px;color:#555;right:127.70000000000005px;">100,00</div>
<svg class="a" style="left:1813px;top:492px" width="19" height="19" viewBox="0 0 19 19"><rect x="0" y="0" width="18.5" height="18.5" rx="2.8" fill="#0a74d8"/><path d="M3.5 9.9L7.5 13.6L15.2 4.5" fill="none" stroke="#fff" stroke-width="2.5"/></svg>
<svg class="a" style="left:334px;top:544px" width="22" height="20" viewBox="0 0 22 20"><path d="M3.4 4.9H7L10.6 14.2L19.9 12.9" fill="none" stroke="#5f9330" stroke-width="1.6" stroke-linecap="square" stroke-linejoin="miter"/><circle cx="10.9" cy="16" r="1.9" fill="#fff" stroke="#5f9330" stroke-width="1.3"/><path d="M10.9 6.6L13.4 6.1L13.8 8.4L15.2 8.1L14.9 5.3L17.3 4.8L18.3 10.4L12.2 11.7Z" fill="#5f9330"/></svg>
<div class="a " style="top:548.44px;font-size:14.6px;line-height:14.6px;color:#1c1f6e;left:358.6px;">SH2512-0002</div>
<svg class="a" style="left:550px;top:545px" width="18" height="20" viewBox="0 0 18 20"><path d="M3.4 2.7H10V7.7H14.8V17.8H3.4Z" fill="#5a9530"/><path d="M11.1 2.9L14.8 6.6V7.4H11.1Z" fill="#5a9530"/><path d="M5.5 5.5H8.6M5.5 7.4H8.6M10.3 15.5H13.3" stroke="#e8f0dc" stroke-width="0.9"/><rect x="5.9" y="9.6" width="7" height="3" rx="1" fill="none" stroke="#e8f0dc" stroke-width="0.9"/></svg>
<div class="a " style="top:548.44px;font-size:14.6px;line-height:14.6px;color:#1c1f6e;left:569.8px;">CO2501-0013</div>
<svg class="a" style="left:913px;top:546px" width="20" height="20" viewBox="0 0 20 20"><path d="M4.1 3H15.7V16.9H16.9V17.7H3.2V16.9H4.1Z" fill="#6563a6"/><g fill="#e6e6f4"><rect x="7.1" y="5" width="2" height="1.6"/><rect x="10.9" y="5" width="2" height="1.6"/><rect x="7.1" y="7.9" width="2" height="1.3"/><rect x="10.9" y="7.9" width="2" height="1.3"/><rect x="7.1" y="10.5" width="2" height="1.4"/><rect x="10.9" y="10.5" width="2" height="1.4"/><rect x="9" y="13.9" width="1.9" height="3"/></g></svg>
<div class="a " style="top:549.14px;font-size:14.6px;line-height:14.6px;color:#1c1f6e;left:933.5px;">Renaud Franck</div>
<div class="a" style="left:1509px;top:545px;width:61px;height:23px;background:#25a37c;border-radius:3px;box-shadow:0 2px 5px rgba(0,0,0,0.12)"></div>
<div class="a " style="top:549.79px;font-size:13.6px;line-height:13.6px;color:#fff;font-weight:bold;left:1516px;">Validée</div>
<div class="a" style="left:1610px;top:545px;width:73px;height:23px;background:#25a37c;border-radius:3px;box-shadow:0 2px 5px rgba(0,0,0,0.12)"></div>
<div class="a " style="top:549.79px;font-size:13.6px;line-height:13.6px;color:#fff;font-weight:bold;left:1617.3px;">En cours</div>
<div class="a " style="top:548.74px;font-size:14.6px;line-height:14.6px;color:#555;right:127.70000000000005px;">11 420,00</div>
<svg class="a" style="left:1813px;top:545px" width="19" height="19" viewBox="0 0 19 19"><rect x="0" y="0" width="18.5" height="18.5" rx="2.8" fill="#0a74d8"/><path d="M3.5 9.9L7.5 13.6L15.2 4.5" fill="none" stroke="#fff" stroke-width="2.5"/></svg>
<svg class="a" style="left:334px;top:597px" width="22" height="20" viewBox="0 0 22 20"><path d="M3.4 4.9H7L10.6 14.2L19.9 12.9" fill="none" stroke="#5f9330" stroke-width="1.6" stroke-linecap="square" stroke-linejoin="miter"/><circle cx="10.9" cy="16" r="1.9" fill="#fff" stroke="#5f9330" stroke-width="1.3"/><path d="M10.9 6.6L13.4 6.1L13.8 8.4L15.2 8.1L14.9 5.3L17.3 4.8L18.3 10.4L12.2 11.7Z" fill="#5f9330"/></svg>
<div class="a " style="top:601.39px;font-size:14.6px;line-height:14.6px;color:#1c1f6e;left:358.6px;">SH2512-0001</div>
<svg class="a" style="left:550px;top:598px" width="18" height="20" viewBox="0 0 18 20"><path d="M3.4 2.7H10V7.7H14.8V17.8H3.4Z" fill="#5a9530"/><path d="M11.1 2.9L14.8 6.6V7.4H11.1Z" fill="#5a9530"/><path d="M5.5 5.5H8.6M5.5 7.4H8.6M10.3 15.5H13.3" stroke="#e8f0dc" stroke-width="0.9"/><rect x="5.9" y="9.6" width="7" height="3" rx="1" fill="none" stroke="#e8f0dc" stroke-width="0.9"/></svg>
<div class="a " style="top:601.39px;font-size:14.6px;line-height:14.6px;color:#1c1f6e;left:569.8px;">CO2512-0014</div>
<svg class="a" style="left:913px;top:599px" width="20" height="20" viewBox="0 0 20 20"><path d="M4.1 3H15.7V16.9H16.9V17.7H3.2V16.9H4.1Z" fill="#6563a6"/><g fill="#e6e6f4"><rect x="7.1" y="5" width="2" height="1.6"/><rect x="10.9" y="5" width="2" height="1.6"/><rect x="7.1" y="7.9" width="2" height="1.3"/><rect x="10.9" y="7.9" width="2" height="1.3"/><rect x="7.1" y="10.5" width="2" height="1.4"/><rect x="10.9" y="10.5" width="2" height="1.4"/><rect x="9" y="13.9" width="1.9" height="3"/></g></svg>
<div class="a " style="top:602.09px;font-size:14.6px;line-height:14.6px;color:#1c1f6e;left:933.5px;">Cannabis</div>
<div class="a" style="left:1509px;top:598px;width:61px;height:23px;background:#25a37c;border-radius:3px;box-shadow:0 2px 5px rgba(0,0,0,0.12)"></div>
<div class="a " style="top:602.74px;font-size:13.6px;line-height:13.6px;color:#fff;font-weight:bold;left:1516px;">Validée</div>
<div class="a" style="left:1610px;top:598px;width:73px;height:23px;background:#25a37c;border-radius:3px;box-shadow:0 2px 5px rgba(0,0,0,0.12)"></div>
<div class="a " style="top:602.74px;font-size:13.6px;line-height:13.6px;color:#fff;font-weight:bold;left:1617.3px;">En cours</div>
<div class="a " style="top:601.69px;font-size:14.6px;line-height:14.6px;color:#555;right:127.70000000000005px;">50,00</div>
<svg class="a" style="left:1813px;top:598px" width="19" height="19" viewBox="0 0 19 19"><rect x="0" y="0" width="18.5" height="18.5" rx="2.8" fill="#0a74d8"/><path d="M3.5 9.9L7.5 13.6L15.2 4.5" fill="none" stroke="#fff" stroke-width="2.5"/></svg>
<div class="a " style="top:654.30px;font-size:15px;line-height:15px;color:#666;letter-spacing:0.1px;left:342.3px;">Total HT</div>
<div class="a " style="top:654.64px;font-size:14.6px;line-height:14.6px;color:#666;letter-spacing:-0.4px;right:130.5999999999999px;margin-right:0.4px;">74 018,75</div>
<div class="a " style="top:654.64px;font-size:14.6px;line-height:14.6px;color:#666;letter-spacing:-0.3px;right:47.90000000000009px;margin-right:0.3px;">74018,75</div>
<div class="a" style="left:1841px;top:815px;width:45px;height:45px;background:#3f4fb4;border-radius:50%;box-shadow:0 3px 8px rgba(0,0,0,0.18)"></div>
<svg class="a" style="left:1856px;top:832px" width="16" height="11" viewBox="0 0 16 11"><path d="M1.5 2L8 8.5L14.5 2" fill="none" stroke="#fff" stroke-width="2.4"/></svg>
<div class="a" style="left:1841px;top:869px;width:45px;height:45px;background:#3f4fb4;border-radius:50%;box-shadow:0 3px 8px rgba(0,0,0,0.18)"></div>
<svg class="a" style="left:1851.5px;top:879.5px" width="23.5" height="23.5" viewBox="0 0 24 24"><path fill="#fff" d="M19.14 12.94c.04-.3.06-.61.06-.94 0-.32-.02-.64-.07-.94l2.03-1.58a.49.49 0 0 0 .12-.61l-1.92-3.32a.488.488 0 0 0-.59-.22l-2.39.96c-.5-.38-1.030-.7-1.62-.94l-.36-2.54a.484.484 0 0 0-.48-.41h-3.84c-.24 0-.43.17-.47.41l-.36 2.54c-.59.24-1.13.57-1.62.94l-2.39-.96c-.22-.08-.47 0-.59.22L2.74 8.87c-.12.21-.08.47.12.61l2.03 1.58c-.05.3-.09.63-.09.94s.02.64.07.94l-2.03 1.58a.49.49 0 0 0-.12.61l1.92 3.32c.12.22.37.29.59.22l2.39-.96c.5.38 1.03.7 1.62.94l.36 2.54c.05.24.24.41.48.41h3.84c.24 0 .44-.17.47-.41l.36-2.54c.59-.24 1.13-.56 1.62-.94l2.39.96c.22.08.47 0 .59-.22l1.92-3.32c.12-.22.07-.47-.12-.61l-2.01-1.58zM12 15.6c-1.98 0-3.6-1.620-3.6-3.6s1.62-3.6 3.6-3.6 3.6 1.62 3.6 3.6-1.62 3.6-3.6 3.6z"/></svg>
<div class="a" style="left:0px;top:0px;width:1902px;height:1px;background:#2e3032"></div>
<div class="a" style="left:1900px;top:1px;width:2px;height:920px;background:#fafafa"></div>
<div class="a" style="left:0px;top:921px;width:60px;height:1px;background:#3a2c2c"></div>
<div class="a" style="left:60px;top:921px;width:360px;height:1px;background:#c4c4c4"></div>
<div class="a" style="left:420px;top:921px;width:1482px;height:1px;background:#2a2a2a"></div>
</body></html>
